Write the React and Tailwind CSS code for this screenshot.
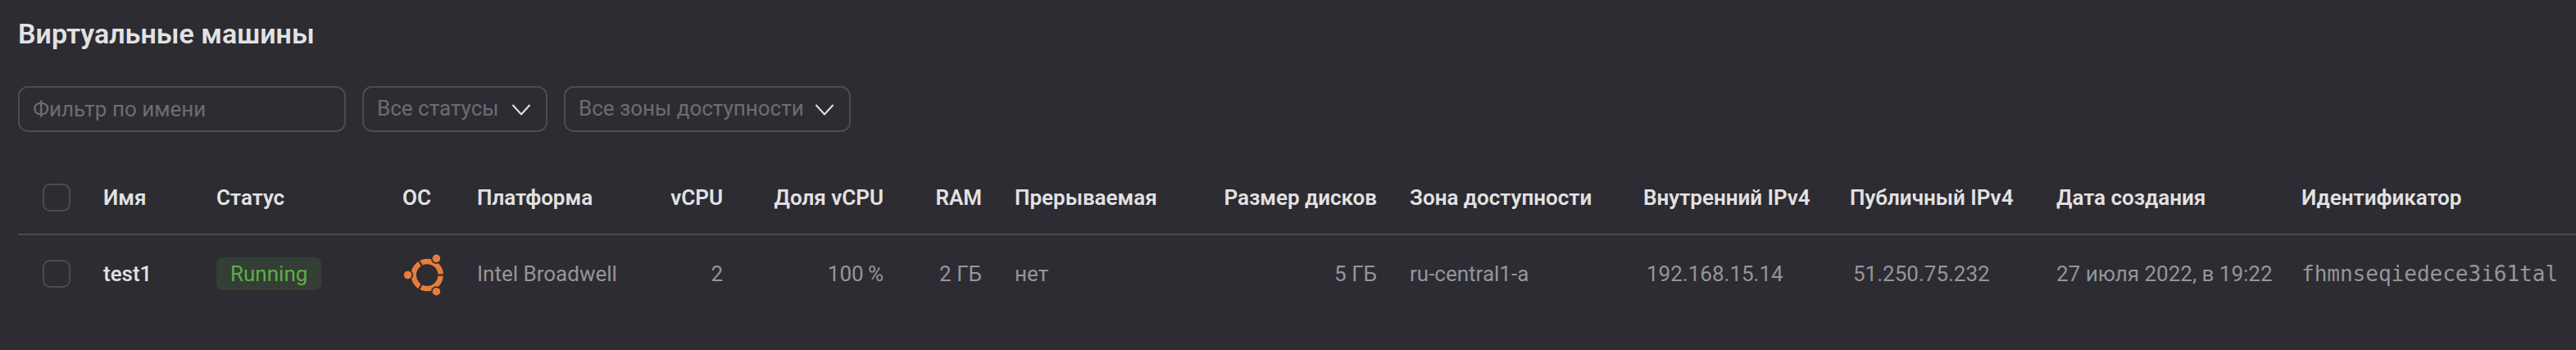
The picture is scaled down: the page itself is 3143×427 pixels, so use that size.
const columns = [
  { key: 'name', title: 'Имя', width: 'w-[138px]' },
  { key: 'status', title: 'Статус', width: 'w-[227px]' },
  { key: 'os', title: 'ОС', width: 'w-[91px]' },
  { key: 'platform', title: 'Платформа', width: 'w-[200px]' },
  { key: 'cpu', title: 'vCPU', width: 'w-[140px]', right: true },
  { key: 'share', title: 'Доля vCPU', width: 'w-[196px]', right: true },
  { key: 'ram', title: 'RAM', width: 'w-[120px]', right: true },
  { key: 'preemptible', title: 'Прерываемая', width: 'w-[232px]' },
  { key: 'disks', title: 'Размер дисков', width: 'w-[250px]', right: true },
  { key: 'zone', title: 'Зона доступности', width: 'w-[285px]' },
  { key: 'privateIp', title: 'Внутренний IPv4', width: 'w-[252px]' },
  { key: 'publicIp', title: 'Публичный IPv4', width: 'w-[252px]' },
  { key: 'created', title: 'Дата создания', width: 'w-[299px]' },
  { key: 'id', title: 'Идентификатор', width: '' },
];

const machines = [
  {
    name: <span className="font-medium text-[#e2e2e2]">test1</span>,
    status: (
      <span className="inline-block rounded-lg bg-[#343e35] px-[17px] leading-10 text-[#5fad46]">
        Running
      </span>
    ),
    os: <UbuntuIcon />,
    platform: 'Intel Broadwell',
    cpu: '2',
    share: '100\u2009%',
    ram: '2 ГБ',
    preemptible: 'нет',
    disks: '5 ГБ',
    zone: 'ru-central1-a',
    privateIp: <span className="pl-1">192.168.15.14</span>,
    publicIp: <span className="pl-1">51.250.75.232</span>,
    created: '27 июля 2022, в 19:22',
    id: (
      <span className="font-['DejaVu_Sans_Mono',monospace]">fhmnseqiedece3i61tal</span>
    ),
  },
];

function UbuntuIcon() {
  return (
    <svg viewBox="0 0 50 54" className="block h-[54px] w-[50px]" role="img" aria-label="Ubuntu">
      <mask id="ubuntu-gaps" maskUnits="userSpaceOnUse" x="0" y="0" width="50" height="54">
        <rect width="50" height="54" fill="white" />
        <g stroke="black" strokeWidth="2.2">
          <path d="M30.2 28.500H50" />
          <path d="M30.2 28.500H50" transform="rotate(120 30.2 28.5)" />
          <path d="M30.2 28.500H50" transform="rotate(240 30.2 28.5)" />
        </g>
        <circle cx="6.6" cy="28.5" r="6.5" />
        <circle cx="41.4" cy="8.3" r="6.5" />
        <circle cx="41.4" cy="48.7" r="6.5" />
      </mask>
      <circle
        cx="30.2"
        cy="28.5"
        r="16.5"
        fill="none"
        stroke="#e87d3a"
        strokeWidth="6.4"
        mask="url(#ubuntu-gaps)"
      />
      <g fill="#e87d3a">
        <circle cx="6.6" cy="28.5" r="4.8" />
        <circle cx="41.4" cy="8.3" r="4.8" />
        <circle cx="41.4" cy="48.7" r="4.8" />
      </g>
    </svg>
  );
}

function Checkbox({ label }) {
  return (
    <input
      type="checkbox"
      aria-label={label}
      className="block size-[34px] appearance-none rounded-[9px] border-2 border-[#4c4b50] checked:bg-[#4c4b50]"
    />
  );
}

function Select({ label, option, width }) {
  return (
    <label className={`relative block ${width}`}>
      <select
        aria-label={label}
        className="h-14 w-full appearance-none rounded-xl border-2 border-[#4c4b50] bg-transparent pr-14 pb-0.5 pl-4 text-[#6d6c71]"
      >
        <option>{option}</option>
      </select>
      <svg
        viewBox="0 0 24 14"
        className="pointer-events-none absolute top-[22px] right-5 h-[14px] w-6"
        fill="none"
        stroke="#e2e2e2"
        strokeWidth="2"
        strokeLinejoin="round"
      >
        <path d="M1.5 1 12 12.500 22.500 1" />
      </svg>
    </label>
  );
}

export default function App() {
  return (
    <main className="min-h-screen overflow-x-auto bg-[#2d2c32] pt-5 pl-[22px] font-[Roboto,sans-serif] text-[26px] leading-10 text-[#969599]">
      <h1 className="text-[34px] leading-[42px] font-semibold text-[#e2e2e2]">
        Виртуальные машины
      </h1>

      <div className="mt-[43px] flex gap-5">
        <input
          type="text"
          aria-label="Фильтр по имени"
          placeholder="Фильтр по имени"
          className="h-14 w-[400px] rounded-xl border-2 border-[#4c4b50] bg-transparent px-4 text-[#e2e2e2] placeholder:text-[#6d6c71]"
        />
        <Select label="Статус" option="Все статусы" width="w-[226px]" />
        <Select label="Зона доступности" option="Все зоны доступности" width="w-[350px]" />
      </div>

      <table className="mt-9 w-full table-fixed border-collapse text-left whitespace-nowrap">
        <thead>
          <tr className="h-[89px] border-b-2 border-[#4c4b50] text-[#e2e2e2]">
            <th className="w-[84px] pl-[30px]">
              <Checkbox label="Выбрать все" />
            </th>
            {columns.map((c) => (
              <th
                key={c.key}
                className={`${c.width} px-5 font-semibold ${c.right ? 'text-right' : ''}`}
              >
                {c.title}
              </th>
            ))}
          </tr>
        </thead>
        <tbody>
          {machines.map((m, i) => (
            <tr key={i} className="h-[94px]">
              <td className="pl-[30px]">
                <Checkbox label="Выбрать test1" />
              </td>
              {columns.map((c) => (
                <td key={c.key} className={`px-5 ${c.right ? 'text-right' : ''}`}>
                  {m[c.key]}
                </td>
              ))}
            </tr>
          ))}
        </tbody>
      </table>
    </main>
  );
}
